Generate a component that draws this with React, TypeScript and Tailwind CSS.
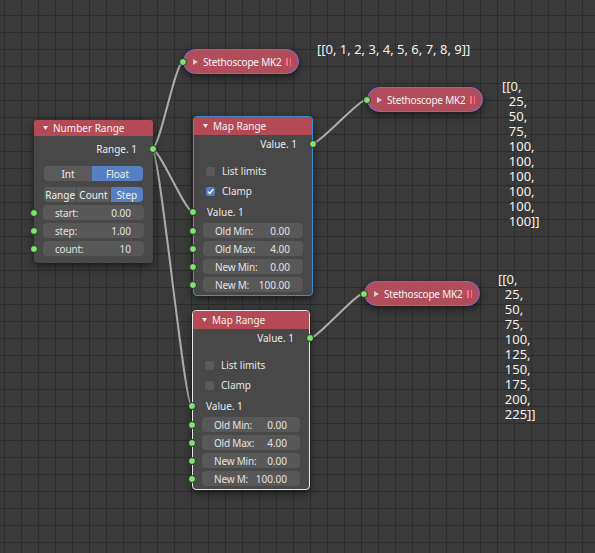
import React from "react";

const FONT = "font-['Noto_Sans','Open_Sans',sans-serif]";

function Socket({ className = "" }: { className?: string }) {
  return (
    <span
      className={`absolute top-1/2 -translate-y-1/2 w-[8px] h-[8px] rounded-full bg-[#7fe36f] border border-[#2e2e2e] ${className}`}
    />
  );
}

function DownTriangle() {
  return (
    <svg width="5" height="4" viewBox="0 0 5 4" className="shrink-0">
      <polygon points="0,0 5,0 2.5,4" fill="#ececec" />
    </svg>
  );
}

function NodeHeader({ title, h }: { title: string; h: string }) {
  return (
    <div className={`${h} flex items-center pl-[9px] gap-[5px] bg-[#b44a55] rounded-t-[3px] text-[10px] text-[#f2f2f2] whitespace-nowrap`}>
      <DownTriangle />
      <span className="leading-none">{title}</span>
    </div>
  );
}

function Field({ label, value, socketLeft }: { label: string; value: string; socketLeft: string }) {
  return (
    <div className="relative h-[15px] mt-[3px]">
      <div className="mx-[9px] h-full rounded-[4px] bg-[#585858] flex items-center justify-between pl-[12px] pr-[13px] text-[10px] text-[#e2e2e2] leading-none whitespace-nowrap">
        <span className="tracking-[-0.2px]">{label}</span>
        <span>{value}</span>
      </div>
      <Socket className={socketLeft} />
    </div>
  );
}

function Checkbox({ checked, label }: { checked: boolean; label: string }) {
  return (
    <div className="h-[16px] flex items-center pl-[12px] gap-[7px] text-[10px] text-[#e6e6e6] whitespace-nowrap">
      <span
        className={`w-[9px] h-[9px] rounded-[2px] flex items-center justify-center ${
          checked ? "bg-[#5680c2]" : "bg-[#5a5a5a]"
        }`}
      >
        {checked && (
          <svg width="9" height="9" viewBox="0 0 9 9">
            <polyline points="1.8,4.6 3.7,6.5 7.3,2.3" fill="none" stroke="#ffffff" strokeWidth="1.3" />
          </svg>
        )}
      </span>
      <span className="leading-none">{label}</span>
    </div>
  );
}

function MapRange({ pos, border, clamp }: { pos: string; border: string; clamp: boolean }) {
  return (
    <div className={`absolute ${pos} h-[180px] rounded-[4px] border ${border} bg-[#484848] shadow-[0_3px_8px_rgba(0,0,0,0.55)]`}>
      <NodeHeader title="Map Range" h="h-[18px]" />
      <div className="relative mt-[1px] h-[16px] flex items-center justify-end pr-[15px] text-[10px] text-[#ececec]">
        <span className="leading-none">Value. 1</span>
        <Socket className="right-[-5px]" />
      </div>
      <div className="mt-[11px]">
        <Checkbox checked={false} label="List limits" />
      </div>
      <div className="mt-[4px]">
        <Checkbox checked={clamp} label="Clamp" />
      </div>
      <div className="relative mt-[5px] h-[16px] flex items-center pl-[13px] text-[10px] text-[#ececec]">
        <span className="leading-none">Value. 1</span>
        <Socket className="left-[-5px]" />
      </div>
      <Field label="Old Min:" value="0.00" socketLeft="left-[-5px]" />
      <Field label="Old Max:" value="4.00" socketLeft="left-[-5px]" />
      <Field label="New Min:" value="0.00" socketLeft="left-[-5px]" />
      <Field label="New M:" value="100.00" socketLeft="left-[-5px]" />
    </div>
  );
}

function Stethoscope({ pos }: { pos: string }) {
  return (
    <div
      className={`absolute ${pos} w-[116px] h-[25px] rounded-full bg-[#b14d5a] border-[1.5px] border-[#7b6bdc] flex items-center pl-[9px] pr-[7px] text-[10px] text-[#f4f4f4] whitespace-nowrap shadow-[0_3px_8px_rgba(0,0,0,0.55)]`}
    >
      <svg width="5" height="6" viewBox="0 0 5 6" className="shrink-0">
        <polygon points="0,0 5,3 0,6" fill="#d8c8cc" />
      </svg>
      <span className="ml-[5px] leading-none tracking-[-0.2px]">Stethoscope MK2</span>
      <span className="ml-auto flex gap-[2px]">
        <span className="w-[1.5px] h-[8px] bg-[#ff6a86]" />
        <span className="w-[1.5px] h-[8px] bg-[#ff6a86]" />
      </span>
      <Socket className="left-[-5px]" />
    </div>
  );
}

const wires = [
  [152, 149, 183, 62],
  [152, 149, 193, 212],
  [152, 149, 192, 407],
  [312, 144, 367, 99],
  [309, 339, 364, 293],
];

export default function App() {
  return (
    <div
      className={`${FONT} relative w-[595px] h-[553px] overflow-hidden bg-[#3a3a3a] bg-[linear-gradient(to_right,#2c2c2c_1px,transparent_1px),linear-gradient(to_bottom,#2c2c2c_1px,transparent_1px)] bg-[size:17px_17px] bg-[position:4px_15px]`}
    >
      {/* links */}
      <svg className="absolute inset-0" width="595" height="553">
        {wires.map(([x1, y1, x2, y2], i) => (
          <path
            key={i}
            d={`M${x1} ${y1} C${x1 + 8} ${y1}, ${x2 - 8} ${y2}, ${x2} ${y2}`}
            fill="none"
            stroke="#acacac"
            strokeWidth="2"
          />
        ))}
      </svg>

      {/* Number Range */}
      <div className="absolute left-[34px] top-[120px] w-[119px] h-[143px] rounded-[4px] bg-[#484848] shadow-[0_3px_8px_rgba(0,0,0,0.55)]">
        <NodeHeader title="Number Range" h="h-[16px]" />
        <div className="relative mt-[5px] h-[16px] flex items-center justify-end pr-[16px] text-[10px] text-[#ececec]">
          <span className="leading-none">Range. 1</span>
          <Socket className="right-[-4px]" />
        </div>
        <div className="mt-[9px] mx-[10px] h-[15px] flex rounded-[4px] overflow-hidden text-[10px] text-[#eeeeee] leading-none">
          <div className="w-[48px] bg-[#5a5a5a] flex items-center justify-center">Int</div>
          <div className="flex-1 bg-[#5680c2] flex items-center justify-center">Float</div>
        </div>
        <div className="mt-[6px] mx-[10px] h-[15px] flex gap-px rounded-[4px] overflow-hidden text-[10px] text-[#eeeeee] leading-none">
          <div className="flex-1 bg-[#5a5a5a] flex items-center justify-center">Range</div>
          <div className="flex-1 bg-[#5a5a5a] flex items-center justify-center">Count</div>
          <div className="flex-1 bg-[#5680c2] flex items-center justify-center">Step</div>
        </div>
        <div className="mt-[3px]">
          <Field label="start:" value="0.00" socketLeft="left-[-4px]" />
          <Field label="step:" value="1.00" socketLeft="left-[-4px]" />
          <Field label="count:" value="10" socketLeft="left-[-4px]" />
        </div>
      </div>

      <MapRange pos="left-[193px] top-[116px] w-[120px]" border="border-[#3a8ed4]" clamp={true} />
      <MapRange pos="left-[192px] top-[310px] w-[118px]" border="border-[#e6e6e6]" clamp={false} />

      <Stethoscope pos="left-[183px] top-[49px]" />
      <Stethoscope pos="left-[367px] top-[87px]" />
      <Stethoscope pos="left-[364px] top-[281px]" />

      {/* stethoscope output */}
      <div className="absolute left-[317px] top-[42px] text-[13px] leading-[15px] text-[#f2f2f2] whitespace-pre">
        [[0, 1, 2, 3, 4, 5, 6, 7, 8, 9]]
      </div>
      <div className="absolute left-[502px] top-[79px] text-[13px] leading-[15px] text-[#f2f2f2] whitespace-pre">
        {"[[0,\n  25,\n  50,\n  75,\n  100,\n  100,\n  100,\n  100,\n  100,\n  100]]"}
      </div>
      <div className="absolute left-[498px] top-[272px] text-[13px] leading-[15px] text-[#f2f2f2] whitespace-pre">
        {"[[0,\n  25,\n  50,\n  75,\n  100,\n  125,\n  150,\n  175,\n  200,\n  225]]"}
      </div>
    </div>
  );
}
